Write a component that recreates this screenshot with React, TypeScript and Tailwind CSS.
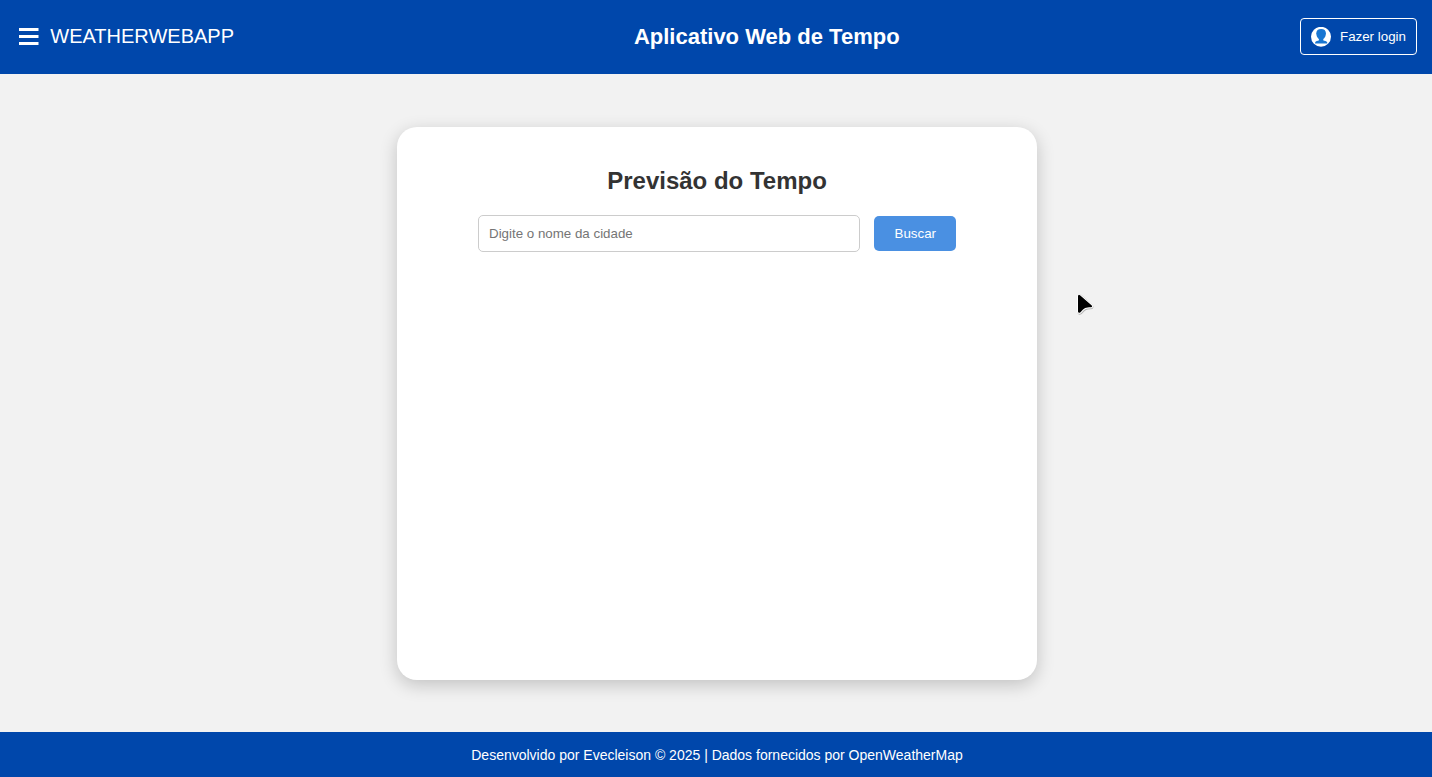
export default function App() {
  return (
    <div className="flex h-[777px] w-full flex-col overflow-hidden bg-[#f2f2f2] font-['Liberation_Sans',Arial,sans-serif]">
      <header className="flex h-[74px] shrink-0 items-center justify-between bg-[#0047ab] px-[15px] pb-px text-white">
        <div className="flex items-center">
          <button aria-label="Menu" className="w-[27px]">
            <svg className="ml-1 block" width="20" height="19" viewBox="0 0 20 19">
              <path d="M0 2.5H19.5M0 9.5H19.5M0 16.5H19.5" stroke="white" strokeWidth="2.8" />
            </svg>
          </button>
          <span className="mr-[-0.5px] ml-[8.3px] text-[20px] leading-[23px]">WEATHERWEBAPP</span>
        </div>
        <h1 className="text-[22px] leading-[25px] font-bold">Aplicativo Web de Tempo</h1>
        <button className="flex h-[37px] w-[117px] items-center rounded-[4px] border border-white px-[10px] text-[13.333px]">
          <svg className="mr-[9px] shrink-0" width="20" height="20" viewBox="0 0 20 20">
            <circle cx="10" cy="9.8" r="10" fill="white" />
            <path d="M4 16.5c0-2 1.200-2.500 3-2.800 1-.2 1.200-.8.8-1.800h4.600c-.4 1-.2 1.600.8 1.800 1.800.3 3.200.8 3.200 2.800z" fill="#1976d2" />
            <path d="M10.100 2C7 2 5.300 3.500 5.300 6.200c0 3.200 1.700 6.300 4.800 6.300s4.800-3.100 4.800-6.300C14.900 3.500 13.200 2 10.100 2z" fill="#1976d2" />
          </svg>
          <span className="whitespace-nowrap">Fazer login</span>
        </button>
      </header>
      <main className="flex grow justify-center pt-[53px] pl-[2px]">
        <section className="flex h-[553px] w-[640px] flex-col items-center rounded-[20px] bg-white pt-10 shadow-[0_5px_18px_rgba(0,0,0,0.2)]">
          <h2 className="text-2xl leading-[28px] font-bold text-[#333]">Previsão do Tempo</h2>
          <form className="mt-5 flex items-center gap-[14px]">
            <input className="h-[37px] w-[382px] rounded-[5px] border border-[#ccc] px-[10px] text-[13.333px] placeholder:text-[#757575]" placeholder="Digite o nome da cidade" />
            <button type="button" className="h-[35px] w-[82px] rounded-[5px] bg-[#4a90e2] pl-[0.5px] text-[13.333px] text-white">Buscar</button>
          </form>
        </section>
      </main>
      <footer className="flex h-[45px] shrink-0 items-center justify-center bg-[#0047ab] pt-px pl-[2px] text-sm text-white">
        Desenvolvido por Evecleison © 2025 | Dados fornecidos por OpenWeatherMap
      </footer>
      <svg className="pointer-events-none absolute top-[291px] left-[1074px]" width="24" height="28" viewBox="0 0 24 28">
        <path d="M4.500 5V21q.5 1.500 2 .5c4-4.500 5-5 10-5q2-.5.500-2L6 4.500q-1-1-1.500.5z" transform="translate(.3 .3)" fill="none" stroke="#777" strokeOpacity=".5" strokeWidth="3" />
        <path d="M4 5V20.800q.5 1.800 2.500.5c4-4.500 5-5 10.500-5q2-.5.500-2L6 4.200q-1.500-1-2 .8z" fill="black" stroke="white" strokeWidth="2" paintOrder="stroke" />
      </svg>
    </div>
  );
}
